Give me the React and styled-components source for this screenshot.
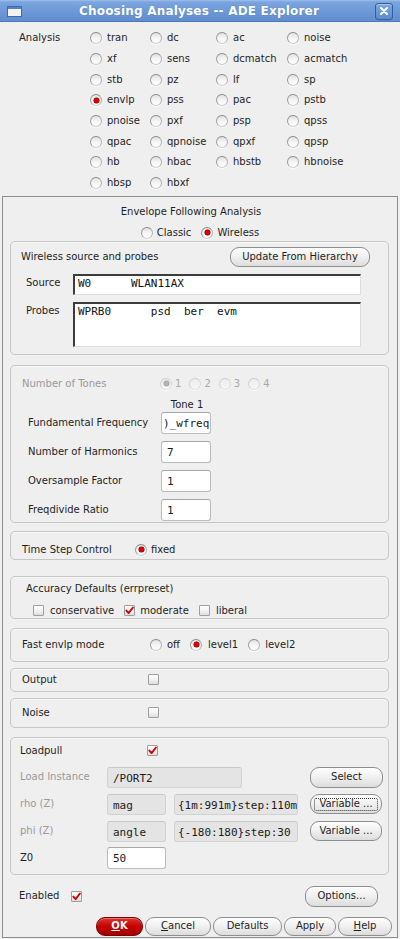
import React from "react";
import styled, { createGlobalStyle, css } from "styled-components";

const Global = createGlobalStyle`
  html, body { margin: 0; padding: 0; background: #efefef; }
  body {
    font-family: "DejaVu Sans", Verdana, sans-serif;
    font-size: 10px;
    color: #1e1e1e;
  }
  * { box-sizing: border-box; }
`;

const Window = styled.div`
  width: 400px;
  height: 939px;
  display: flex;
  flex-direction: column;
  background: #efefef;
  overflow: hidden;
`;

const TitleBar = styled.div`
  height: 22px;
  flex: none;
  display: grid;
  grid-template-columns: 16px 1fr 18px;
  align-items: center;
  padding: 0 7px 0 7px;
  background: linear-gradient(#9dbfeb 0, #7ba5df 2px, #6c98d7 55%, #5f8dcf 100%);
  border-bottom: 1px solid #4d79b8;
`;

const Title = styled.div`
  text-align: center;
  color: #fff;
  font-weight: bold;
  font-size: 12px;
  letter-spacing: 0.2px;
  text-shadow: 0 0 1px rgba(40, 70, 120, 0.4);
  line-height: 22px;
`;

const CloseBox = styled.div`
  width: 18px;
  height: 17px;
  border: 1px solid #2f5d9e;
  border-radius: 3px;
  background: linear-gradient(#7ea7df, #5d8bcd);
  box-shadow: inset 0 1px 0 rgba(255, 255, 255, 0.35);
  display: flex;
  align-items: center;
  justify-content: center;
`;

const AnalysisSection = styled.div`
  display: flex;
  padding: 6px 0 0 19px;
  flex: none;
`;

const SideLabel = styled.div`
  width: ${(p) => p.$w}px;
  flex: none;
  line-height: ${(p) => p.$lh || 20.7}px;
  color: ${(p) => (p.$muted ? "#9a9a9a" : "inherit")};
  white-space: nowrap;
`;

const RadioGrid = styled.div`
  display: grid;
  grid-template-columns: 60px 66px 71px 1fr;
  grid-auto-rows: 20.7px;
  align-items: center;
  flex: 1;
`;

const Scroller = styled.div`
  flex: 1;
  margin: 2px 2px 1px 2px;
  border: 1px solid #8e8e8e;
  display: flex;
  flex-direction: column;
`;

const Heading = styled.div`
  margin-top: 8px;
  line-height: 14px;
  text-align: center;
  padding-right: ${(p) => p.$shift || 0}px;
`;

const CenterRow = styled.div`
  margin-top: 7px;
  height: 14px;
  display: flex;
  justify-content: center;
  gap: 10px;
  padding-left: ${(p) => p.$shift || 0}px;
`;

const Frame = styled.section`
  margin: ${(p) => p.$mt}px 8px 0 7px;
  padding: ${(p) => p.$pt}px ${(p) => p.$pr ?? 10}px ${(p) => p.$pb}px
    ${(p) => p.$pl ?? 10}px;
  border: 1px solid #c6c6c6;
  border-radius: 5px;
  box-shadow: inset 0 1px 0 #f8f8f8;
  display: flex;
  flex-direction: column;
  gap: ${(p) => p.$gap || 0}px;
`;

const SpreadRow = styled.div`
  display: flex;
  align-items: center;
  justify-content: space-between;
  height: ${(p) => p.$h}px;
`;

const FieldRow = styled.div`
  display: grid;
  grid-template-columns: ${(p) => p.$cols};
  align-items: ${(p) => p.$align || "center"};
  padding-left: ${(p) => p.$indent || 0}px;
  margin-top: ${(p) => p.$mt || 0}px;
  min-height: 14px;
`;

const Label = styled.div`
  line-height: 14px;
  white-space: nowrap;
  padding-top: ${(p) => p.$pt || 0}px;
  color: ${(p) => (p.$muted ? "#999999" : "inherit")};
  text-align: ${(p) => (p.$center ? "center" : "left")};
`;

const SunkenField = styled.div`
  height: ${(p) => p.$h}px;
  background: #fff;
  border-top: 2px solid #3c3c3c;
  border-left: 2px solid #3c3c3c;
  border-right: 1px solid #dedede;
  border-bottom: 1px solid #dedede;
  font-family: "DejaVu Sans Mono", monospace;
  font-size: 11px;
  line-height: 15px;
  white-space: pre;
  padding: 0 3px;
  color: #111;
  overflow: hidden;
`;

const Entry = styled.div`
  height: ${(p) => p.$h || 22}px;
  width: ${(p) => (p.$w ? `${p.$w}px` : "auto")};
  border: 1px solid ${(p) => (p.$disabled ? "#d2d2d2" : "#bcbcbc")};
  border-top-color: ${(p) => (p.$disabled ? "#c8c8c8" : "#a6a6a6")};
  border-radius: 3px;
  background: ${(p) => (p.$disabled ? "#e4e4e4" : "#ffffff")};
  font-family: "DejaVu Sans Mono", monospace;
  font-size: 11px;
  line-height: ${(p) => (p.$h || 22) - 2}px;
  padding: 0 ${(p) => p.$pad ?? 5}px;
  padding-top: 1px;
  white-space: pre;
  overflow: hidden;
  color: #1a1a1a;
  justify-self: start;
`;

const Options = styled.div`
  display: flex;
  align-items: center;
  gap: ${(p) => p.$gap}px;
  padding-left: ${(p) => p.$indent || 0}px;
  margin-top: ${(p) => p.$mt || 0}px;
`;

const OptionLabel = styled.label`
  display: inline-flex;
  align-items: center;
  gap: ${(p) => p.$gap ?? 5}px;
  line-height: 14px;
  white-space: nowrap;
  color: ${(p) => (p.$disabled ? "#a8a8a8" : "inherit")};
`;

const RadioMark = styled.span`
  position: relative;
  flex: none;
  width: 12px;
  height: 12px;
  border-radius: 50%;
  border: 1px solid;
  border-color: ${(p) =>
    p.$disabled ? "#cdcdcd #dadada #e2e2e2 #d2d2d2" : "#8a8a8a #b0b0b0 #cfcfcf #9c9c9c"};
  background: ${(p) =>
    p.$disabled
      ? "linear-gradient(#ececec, #f7f7f7)"
      : "linear-gradient(#e2e2e2 0, #f6f6f6 55%, #ffffff 100%)"};
  box-shadow: 0 1px 0 #fbfbfb;
  ${(p) =>
    p.$checked &&
    css`
      &::after {
        content: "";
        position: absolute;
        left: 2.5px;
        top: 2.5px;
        width: 5px;
        height: 5px;
        border-radius: 50%;
        background: ${p.$disabled ? "#b4b4b4" : "#e00000"};
        box-shadow: 0 0 0 0.5px ${p.$disabled ? "#a0a0a0" : "#8a0000"};
      }
    `}
`;

const CheckMark = styled.span`
  flex: none;
  width: 11px;
  height: 11px;
  border: 1px solid #9e9e9e;
  border-radius: 1px;
  background: linear-gradient(#ffffff 0, #f3f3f3 50%, #dedede 100%);
  display: inline-flex;
  align-items: center;
  justify-content: center;
`;

const Button = styled.button`
  position: relative;
  width: ${(p) => p.$w}px;
  height: ${(p) => p.$h || 21}px;
  flex: none;
  justify-self: start;
  margin: 0 0 0 ${(p) => p.$ml || 0}px;
  padding: 0;
  border: 1px solid #8e8e8e;
  border-radius: 9px;
  background: linear-gradient(#fefefe 0, #f1f1f1 45%, #dddddd 100%);
  box-shadow: inset 0 1px 0 #ffffff;
  font-family: "DejaVu Sans", Verdana, sans-serif;
  font-size: 10px;
  color: #1e1e1e;
  line-height: 1;
  ${(p) =>
    p.$focus &&
    css`
      &::after {
        content: "";
        position: absolute;
        inset: 3px 3px 2px 3px;
        border: 1px dotted #3a3a3a;
        border-radius: 2px;
      }
    `}
  ${(p) =>
    p.$primary &&
    css`
      border-color: #7a0000;
      background: linear-gradient(#e03434 0, #c40000 50%, #a20000 100%);
      box-shadow: inset 0 1px 0 rgba(255, 255, 255, 0.3);
      color: #fff;
      font-weight: bold;
    `}
`;

const Footer = styled.div`
  margin-top: 11px;
  padding: 0 19px 0 16px;
`;

const EnabledGroup = styled.div`
  display: flex;
  align-items: center;
`;

const ButtonBar = styled.div`
  margin-top: 10px;
  display: flex;
  justify-content: flex-end;
  gap: 2px;
  padding-right: 5px;
`;

const LoadGrid = styled.div`
  margin-top: 9px;
  display: grid;
  grid-template-columns: 79px 59px 124px 76px;
  grid-auto-rows: 21px;
  column-gap: 8px;
  row-gap: 6px;
  align-items: center;
`;

const Wide = styled.div`
  grid-column: ${(p) => p.$span};
  justify-self: start;
`;

function Radio({ label, checked, disabled, gap }) {
  return (
    <OptionLabel $disabled={disabled} $gap={gap}>
      <RadioMark $checked={checked} $disabled={disabled} />
      {label}
    </OptionLabel>
  );
}

function Check({ label, checked, gap }) {
  return (
    <OptionLabel $gap={gap}>
      <CheckMark>
        {checked && (
          <svg width="10" height="9" viewBox="0 0 10 9">
            <path
              d="M1.5 4.6 L4 7.4 L8.8 1.2"
              fill="none"
              stroke="#d40000"
              strokeWidth="2.1"
              strokeLinecap="round"
              strokeLinejoin="round"
            />
          </svg>
        )}
      </CheckMark>
      {label}
    </OptionLabel>
  );
}

const analyses = [
  "tran", "dc", "ac", "noise",
  "xf", "sens", "dcmatch", "acmatch",
  "stb", "pz", "lf", "sp",
  "envlp", "pss", "pac", "pstb",
  "pnoise", "pxf", "psp", "qpss",
  "qpac", "qpnoise", "qpxf", "qpsp",
  "hb", "hbac", "hbstb", "hbnoise",
  "hbsp", "hbxf",
];

export default function App() {
  return (
    <Window>
      <Global />
      <TitleBar>
        <svg width="15" height="11" viewBox="0 0 15 11">
          <rect x="0.5" y="0.5" width="14" height="10" fill="#f2f2f2" stroke="#3f6aa6" />
          <rect x="1" y="1" width="13" height="2" fill="#5a80b8" />
        </svg>
        <Title>Choosing Analyses -- ADE Explorer</Title>
        <CloseBox>
          <svg width="10" height="10" viewBox="0 0 10 10">
            <path d="M2 2 L8 8 M8 2 L2 8" stroke="#ffffff" strokeWidth="2" strokeLinecap="round" />
          </svg>
        </CloseBox>
      </TitleBar>

      <AnalysisSection>
        <SideLabel $w={71}>Analysis</SideLabel>
        <RadioGrid>
          {analyses.map((a) => (
            <Radio key={a} label={a} checked={a === "envlp"} />
          ))}
        </RadioGrid>
      </AnalysisSection>

      <Scroller>
        <Heading $shift={18}>Envelope Following Analysis</Heading>
        <CenterRow $shift={-10}>
          <Radio label="Classic" gap={4} />
          <Radio label="Wireless" checked gap={4} />
        </CenterRow>

        <Frame $mt={1} $pt={5} $pb={7} $pr={18} $gap={7}>
          <SpreadRow $h={20}>
            <Label>Wireless source and probes</Label>
            <Button $w={140} $h={20}>Update From Hierarchy</Button>
          </SpreadRow>
          <FieldRow $cols="47px 288px" $indent={5} $align="start">
            <Label $pt={2}>Source</Label>
            <SunkenField $h={21}>{"W0      WLAN11AX"}</SunkenField>
          </FieldRow>
          <FieldRow $cols="47px 288px" $indent={5} $align="start">
            <Label $pt={2}>Probes</Label>
            <SunkenField $h={45}>{"WPRB0      psd  ber  evm"}</SunkenField>
          </FieldRow>
        </Frame>

        <Frame $mt={10} $pt={11} $pb={1} $pl={11}>
          <FieldRow $cols="138px auto">
            <Label $muted>Number of Tones</Label>
            <Options $gap={8}>
              <Radio label="1" checked disabled gap={3} />
              <Radio label="2" disabled gap={3} />
              <Radio label="3" disabled gap={3} />
              <Radio label="4" disabled gap={3} />
            </Options>
          </FieldRow>
          <FieldRow $cols="133px 52px" $indent={6} $mt={7}>
            <span />
            <Label $center>Tone 1</Label>
          </FieldRow>
          <FieldRow $cols="133px 50px" $indent={6}>
            <Label>Fundamental Frequency</Label>
            <Entry $w={50} $pad={1}>{")_wfreq"}</Entry>
          </FieldRow>
          <FieldRow $cols="133px 50px" $indent={6} $mt={7}>
            <Label>Number of Harmonics</Label>
            <Entry $w={50}>7</Entry>
          </FieldRow>
          <FieldRow $cols="133px 50px" $indent={6} $mt={7}>
            <Label>Oversample Factor</Label>
            <Entry $w={50}>1</Entry>
          </FieldRow>
          <FieldRow $cols="133px 50px" $indent={6} $mt={7}>
            <Label>Freqdivide Ratio</Label>
            <Entry $w={50}>1</Entry>
          </FieldRow>
        </Frame>

        <Frame $mt={8} $pt={11} $pb={2} $pl={11}>
          <FieldRow $cols="113px auto">
            <Label>Time Step Control</Label>
            <Radio label="fixed" checked gap={4} />
          </FieldRow>
        </Frame>

        <Frame $mt={16} $pt={5} $pb={0} $pl={15}>
          <Label>Accuracy Defaults (errpreset)</Label>
          <Options $gap={10} $indent={7} $mt={8}>
            <Check label="conservative" gap={6} />
            <Check label="moderate" checked gap={5} />
            <Check label="liberal" gap={6} />
          </Options>
        </Frame>

        <Frame $mt={9} $pt={9} $pb={9} $pl={11}>
          <FieldRow $cols="128px auto">
            <Label>Fast envlp mode</Label>
            <Options $gap={10}>
              <Radio label="off" gap={5} />
              <Radio label="level1" checked gap={6} />
              <Radio label="level2" gap={5} />
            </Options>
          </FieldRow>
        </Frame>

        <Frame $mt={6} $pt={4} $pb={4} $pl={11}>
          <FieldRow $cols="126px auto">
            <Label>Output</Label>
            <Check />
          </FieldRow>
        </Frame>

        <Frame $mt={6} $pt={7} $pb={7} $pl={11}>
          <FieldRow $cols="126px auto">
            <Label>Noise</Label>
            <Check />
          </FieldRow>
        </Frame>

        <Frame $mt={9} $pt={6} $pb={5} $pl={9}>
          <FieldRow $cols="127px auto">
            <Label>Loadpull</Label>
            <Check checked />
          </FieldRow>
          <LoadGrid>
            <Label $muted>Load Instance</Label>
            <Wide $span="2 / 4">
              <Entry $w={135} $h={21} $disabled>/PORT2</Entry>
            </Wide>
            <Button $w={73} $ml={4}>Select</Button>

            <Label $muted>rho (Z)</Label>
            <Entry $w={59} $h={21} $disabled>mag</Entry>
            <Entry $w={124} $h={21} $disabled $pad={3}>{"{1m:991m}step:110m"}</Entry>
            <Button $w={72} $h={20} $ml={4} $focus>Variable ...</Button>

            <Label $muted>phi (Z)</Label>
            <Entry $w={59} $h={21} $disabled>angle</Entry>
            <Entry $w={124} $h={21} $disabled $pad={3}>{"{-180:180}step:30"}</Entry>
            <Button $w={72} $h={20} $ml={4}>Variable ...</Button>

            <Label>Z0</Label>
            <Entry $w={59} $h={22}>50</Entry>
          </LoadGrid>
        </Frame>

        <Footer>
          <SpreadRow $h={21}>
            <EnabledGroup>
              <SideLabel $w={52} $lh={14}>Enabled</SideLabel>
              <Check checked />
            </EnabledGroup>
            <Button $w={73}>Options...</Button>
          </SpreadRow>
        </Footer>
        <ButtonBar>
          <Button $w={47} $h={19} $primary><u>O</u>K</Button>
          <Button $w={66} $h={19}><u>C</u>ancel</Button>
          <Button $w={69} $h={19}>Defaults</Button>
          <Button $w={52} $h={19}>Apply</Button>
          <Button $w={54} $h={19}><u>H</u>elp</Button>
        </ButtonBar>
      </Scroller>
    </Window>
  );
}
